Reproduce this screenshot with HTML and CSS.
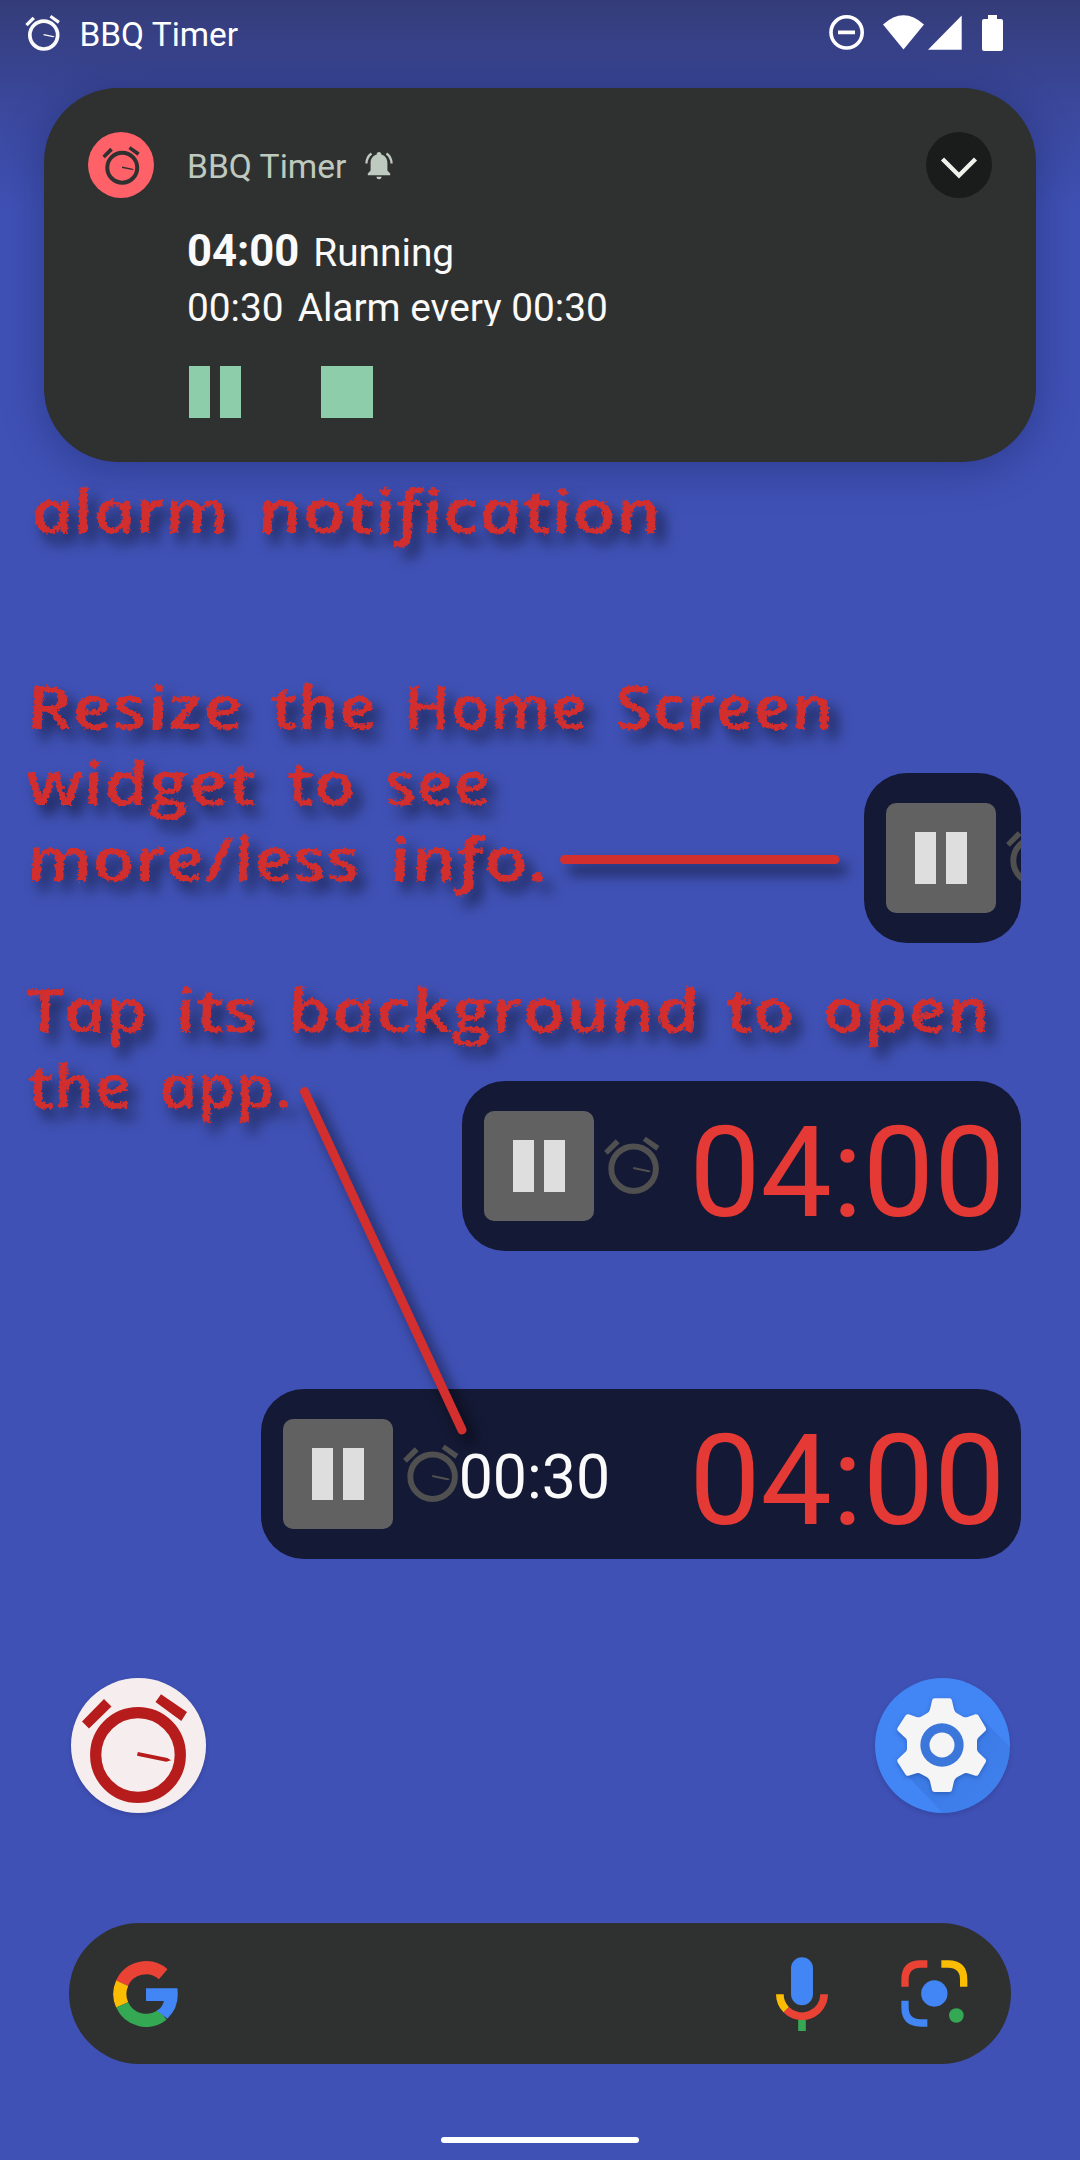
FILE: index.html
```html
<!DOCTYPE html>
<html lang="en">
<head>
<meta charset="utf-8">
<title>BBQ Timer</title>
<link rel="stylesheet" href="styles.css">
</head>
<body>
<svg class="defs" width="0" height="0" aria-hidden="true">
  <symbol id="clock" viewBox="-60 -64 120 120">
    <circle r="42.3" fill="none" stroke="currentColor" stroke-width="11.3"/>
    <path fill="currentColor" d="M-56-33.5l22-22.5 7.5 7.5-22.5 22zM17.5-53l5.5-7.7 26 17.7-5.7 9zM-.2-3l29.5 6 3.8 2.3-4.8 1.5L-1 .8z"/>
  </symbol>
</svg>
<div class="screen">
  <header class="status">
    <svg class="status-clock"><use href="#clock"/></svg>
    <span class="status-title">BBQ Timer</span>
    <svg class="status-icons" viewBox="826 10 180 46">
      <g fill="#fff">
        <path fill="none" stroke="#fff" stroke-width="3.6" d="M862.2 32.4a15.6 15.6 0 1 1-31.2 0a15.6 15.6 0 0 1 31.2 0zM838 32.4h17"/>
        <path d="M883 24.5q20.500-18.500 41 0l-20.500 25zM928 49.800L961.700 15.500V49.800z"/>
        <path d="M988 15h9v4h4a2 2 0 0 1 2 2v28a2 2 0 0 1-2 2h-17a2 2 0 0 1-2-2V21a2 2 0 0 1 2-2h4z"/>
      </g>
    </svg>
  </header>

  <section class="card">
    <div class="avatar"><svg><use href="#clock"/></svg></div>
    <div class="card-body">
      <div class="card-head">
        <span>BBQ Timer</span>
        <svg class="bell" viewBox="0 0 28 28">
          <path fill="currentColor" d="M14 0c1.500 0 2.300 1 2.300 2.400 4 1 6.100 4.500 6.100 8.600v7.600l2.800 3v1.600H2.800v-1.600l2.800-3V11c0-4.100 2.100-7.600 6.100-8.600C11.700 1 12.500 0 14 0zM11.500 24.800h5a2.500 2.500 0 0 1-5 0z"/>
          <path fill="none" stroke="currentColor" stroke-width="2.300" d="M6.500 1.500Q1.600 5 1.400 11.500M21.500 1.500Q26.400 5 26.600 11.500"/>
        </svg>
      </div>
      <div class="line-main"><b>04:00</b><span>Running</span></div>
      <div class="line-sub"><span>00:30</span><span>Alarm every 00:30</span></div>
      <div class="actions">
        <span class="pause"><i></i><i></i></span>
        <span class="stop"></span>
      </div>
    </div>
    <div class="expand"><svg viewBox="0 0 66 66"><path d="M16.500 27L33 43.500 49.500 27" fill="none" stroke="#f1f1ec" stroke-width="4.400"/></svg></div>
  </section>

  <main class="widgets">
    <div class="widget small">
      <span class="button"><i></i><i></i></span>
      <svg class="widget-clock"><use href="#clock"/></svg>
    </div>
    <div class="widget medium">
      <span class="button"><i></i><i></i></span>
      <svg class="widget-clock"><use href="#clock"/></svg>
      <span class="time">04:00</span>
    </div>
    <div class="widget large">
      <span class="button"><i></i><i></i></span>
      <svg class="widget-clock"><use href="#clock"/></svg>
      <span class="period">00:30</span>
      <span class="time">04:00</span>
    </div>
  </main>

  <nav class="apps">
    <div class="app timer"><svg><use href="#clock"/></svg></div>
    <div class="app settings">
      <svg viewBox="105 84 405 405">
        <defs><linearGradient id="ray" x1="0" y1="0" x2="1" y2="1"><stop offset=".3" stop-color="#1a3f95" stop-opacity=".16"/><stop offset="1" stop-color="#1a3f95" stop-opacity="0"/></linearGradient></defs>
        <path fill="url(#ray)" d="M412 192L560 340V560H375L202 377z"/>
        <path class="gear" fill="#f5f5f5" d="M284 145h44q7 0 8 7l6 26q2 8 9 12l18 10q7 3 14 1l23-8q7-2 10 4l21 36q3 6-1 10l-19 18q-6 5-6 12v24q0 7 6 12l19 18q4 4 1 10l-21 36q-3 6-10 4l-23-7q-7-2-14 2l-18 10q-7 4-9 12l-6 26q-1 6-8 6h-44q-7 0-8-6l-6-26q-2-8-9-12l-18-10q-7-4-14-2l-23 7q-7 2-10-4l-23-36q-3-6 1-10l19-18q8-5 8-12v-24q0-7-8-12l-19-18q-4-4-1-10l23-36q3-6 10-4l23 8q7 2 14-1l18-10q7-4 9-12l6-26q1-7 8-7z"/>
        <circle cx="306" cy="285" r="65" fill="#3b76db"/><circle cx="306" cy="285" r="37.500" fill="#f5f5f5"/>
      </svg>
    </div>
  </nav>

  <footer class="search">
    <svg class="google" viewBox="219 180 195 198">
      <g fill="none" stroke-width="39.500">
        <path stroke="#ea4335" d="M246 247A79 79 0 0 1 369.500 219.500"/>
        <path stroke="#fbbc04" d="M246.500 311.500A79 79 0 0 1 246.500 246.500"/>
        <path stroke="#34a853" d="M367.500 341A79 79 0 0 1 246.500 311.500"/>
      </g>
      <path fill="#4285f4" d="M318 262h94q8 56-30 91l-31-24q16-10 21-29h-54z"/>
    </svg>
    <svg class="mic" viewBox="108 170 156 224">
      <rect x="153" y="171" width="66" height="144" rx="33" fill="#4285f4"/>
      <path stroke="#34a853" stroke-width="23" d="M186 358v35"/>
      <g fill="none" stroke-width="23"><path stroke="#ea4335" d="M252.500 282a66.500 66.500 0 0 1-114 46"/><path stroke="#fbbc04" d="M119.500 282q0 27 19 46"/></g>
    </svg>
    <svg class="lens" viewBox="482 180 200 201">
      <g fill="none" stroke-width="22">
        <path stroke="#ea4335" d="M494 260v-21q0-47 47-47h20"/><path stroke="#fbbc04" d="M603 192h20q47 0 47 47v21"/><path stroke="#4285f4" d="M494 302v20q0 47 47 47h20"/>
      </g>
      <circle cx="582" cy="280.500" r="39.500" fill="#4285f4"/><circle cx="648" cy="346.500" r="22" fill="#34a853"/>
    </svg>
  </footer>
  <div class="home-pill"></div>

  <svg class="notes" viewBox="0 0 1080 2160">
    <defs>
      <filter id="chalk" x="-5%" y="-5%" width="110%" height="110%">
        <feTurbulence type="fractalNoise" baseFrequency=".28" numOctaves="2" seed="4"/>
        <feDisplacementMap in="SourceGraphic" scale="6" xChannelSelector="R" yChannelSelector="G"/>
      </filter>
    </defs>
    <g class="shadowed">
      <g class="hand">
        <text transform="translate(35 533) skewX(13)" textLength="198" lengthAdjust="spacingAndGlyphs">alarm</text>
        <text transform="translate(261 533) skewX(13)" textLength="404" lengthAdjust="spacingAndGlyphs">notification</text>

        <text transform="translate(30 729) skewX(13)" textLength="217" lengthAdjust="spacingAndGlyphs">Resize</text>
        <text transform="translate(275 729) skewX(13)" textLength="105" lengthAdjust="spacingAndGlyphs">the</text>
        <text transform="translate(407 729) skewX(13)" textLength="184" lengthAdjust="spacingAndGlyphs">Home</text>
        <text transform="translate(619 729) skewX(13)" textLength="218" lengthAdjust="spacingAndGlyphs">Screen</text>
        <text transform="translate(30 805) skewX(13)" textLength="230" lengthAdjust="spacingAndGlyphs">widget</text>
        <text transform="translate(291 805) skewX(13)" textLength="68" lengthAdjust="spacingAndGlyphs">to</text>
        <text transform="translate(389 805) skewX(13)" textLength="105" lengthAdjust="spacingAndGlyphs">see</text>
        <text transform="translate(30 881) skewX(13)" textLength="334" lengthAdjust="spacingAndGlyphs">more/less</text>
        <text transform="translate(393 881) skewX(13)" textLength="160" lengthAdjust="spacingAndGlyphs">info.</text>

        <text transform="translate(30 1032) skewX(13)" textLength="122" lengthAdjust="spacingAndGlyphs">Tap</text>
        <text transform="translate(179 1032) skewX(13)" textLength="83" lengthAdjust="spacingAndGlyphs">its</text>
        <text transform="translate(291 1032) skewX(13)" textLength="412" lengthAdjust="spacingAndGlyphs">background</text>
        <text transform="translate(730 1032) skewX(13)" textLength="68" lengthAdjust="spacingAndGlyphs">to</text>
        <text transform="translate(826 1032) skewX(13)" textLength="168" lengthAdjust="spacingAndGlyphs">open</text>
        <text transform="translate(32 1108) skewX(13)" textLength="103" lengthAdjust="spacingAndGlyphs">the</text>
        <text transform="translate(163 1108) skewX(13)" textLength="133" lengthAdjust="spacingAndGlyphs">app.</text>
      </g>
      <path class="pointer" d="M564.500 859.500H835M304.500 1091.500L462 1430"/>
    </g>
  </svg>
</div>
</body>
</html>
```
FILE: styles.css
```css
* { box-sizing: border-box; }
body { margin: 0; background: #3f51b5; font-family: Roboto, sans-serif; color: #fafafa; }
svg { display: block; flex: none; }
.defs { position: absolute; }
.screen {
  position: relative; width: 1080px; height: 2160px; overflow: hidden;
  display: flex; flex-direction: column;
  background: linear-gradient(#343c78 0, #3a479a 100px, #3f51b5 210px);
}

.status { height: 66px; margin-bottom: 22px; padding: 0 74px 0 23.500px; display: flex; align-items: center; flex: none; }
.status-clock { width: 39.500px; height: 39.500px; margin-top: 2px; }
.status-title { margin-left: 16.500px; font-size: 33.400px; line-height: 40px; margin-top: 4px; color: #fff; }
.status-icons { width: 180px; height: 46px; margin-left: auto; }

.card {
  flex: none; height: 374px; margin: 0 44px; padding: 44px; border-radius: 74px;
  background: #2f3130; display: flex; align-items: flex-start;
  box-shadow: 0 6px 44px rgba(10, 15, 60, .32);
}
.avatar, .expand { width: 66px; height: 66px; border-radius: 50%; flex: none; display: flex; justify-content: center; }
.avatar { background: #ff6169; color: #2f3130; }
.avatar svg { width: 42.500px; height: 42.500px; margin: 12.500px 0 0 2px; }
.expand { background: #1a1c1b; }
.expand svg { width: 66px; height: 66px; }
.card-body { flex: 1; margin-left: 33px; display: flex; flex-direction: column; }
.card-head { display: flex; align-items: center; height: 66px; gap: 19px; font-size: 33.600px; color: #bec9bf; padding-top: 3px; }
.bell { width: 28px; height: 28px; margin-top: -1px; }
.line-main { display: flex; align-items: baseline; gap: 14px; height: 56px; line-height: 56px; margin-top: 26px; font-size: 38.800px; }
.line-main b { font-size: 43.600px; }
.line-sub { display: flex; gap: 14px; height: 46px; line-height: 56px; font-size: 38.800px; overflow: hidden; }
.actions { display: flex; gap: 80px; margin: 40px 0 0 2px; }
.pause { display: flex; justify-content: space-between; width: 52px; height: 52px; }
.pause i { width: 21px; background: #8dcda9; }
.stop { width: 52px; height: 52px; background: #8dcda9; }

.widgets { flex: none; margin: 311px 59px 0 0; display: flex; flex-direction: column; align-items: flex-end; gap: 138px; }
.widget { height: 170px; border-radius: 43px; background: #141935; padding: 0 15.500px 0 22px; display: flex; align-items: center; overflow: hidden; }
.small { width: 157px; }
.medium { width: 559px; }
.large { width: 760px; }
.button { flex: none; width: 110px; height: 110px; border-radius: 10px; background: #616161; display: flex; align-items: center; justify-content: center; gap: 9.500px; }
.button i { width: 21px; height: 52px; background: #dedede; }
.widget-clock { width: 63.200px; height: 63.200px; margin: 2px 0 0 7.500px; color: #505050; }
.period { font-size: 60.800px; margin: 6px 0 0 -5px; }
.time { font-size: 127px; line-height: 150px; color: #e53935; margin: 14px 0 0 auto; }

.apps { flex: none; display: flex; justify-content: space-between; margin: 119px 70px 0 71px; }
.app { width: 135px; height: 135px; border-radius: 50%; box-shadow: 0 2px 5px rgba(0, 0, 40, .15); overflow: hidden; }
.timer { background: #f6eeee; color: #b71c1c; }
.timer svg { width: 120px; height: 120px; margin: 12.500px 0 0 7px; }
.settings { background: #4285f4; }
.settings svg { width: 135px; height: 135px; }
.gear { filter: drop-shadow(0 5px 7px rgba(10, 40, 110, .35)); }

.search { flex: none; height: 141px; margin: 110px 69px 0; padding: 0 43px 0 44px; border-radius: 71px; background: #2f3130; display: flex; align-items: center; }
.google { width: 65px; height: 66px; margin-right: auto; }
.mic { width: 52px; height: 74.600px; margin: 1px 73px 0 0; }
.lens { width: 66.700px; height: 67px; }
.home-pill { width: 198px; height: 6px; border-radius: 3px; background: #fff; margin: 73px auto 0; flex: none; }

/* handwritten callouts drawn over the home screen */
.notes { position: absolute; inset: 0; width: 1080px; height: 2160px; pointer-events: none; }
.shadowed { filter: drop-shadow(8px 10px 7px rgba(0, 0, 0, .6)); }
.hand { font-family: "Open Sans", sans-serif; font-style: italic; font-weight: 600; font-size: 60px; fill: #d32f2f; filter: url(#chalk); }
.pointer { stroke: #d32f2f; stroke-width: 9; stroke-linecap: round; fill: none; }
```
